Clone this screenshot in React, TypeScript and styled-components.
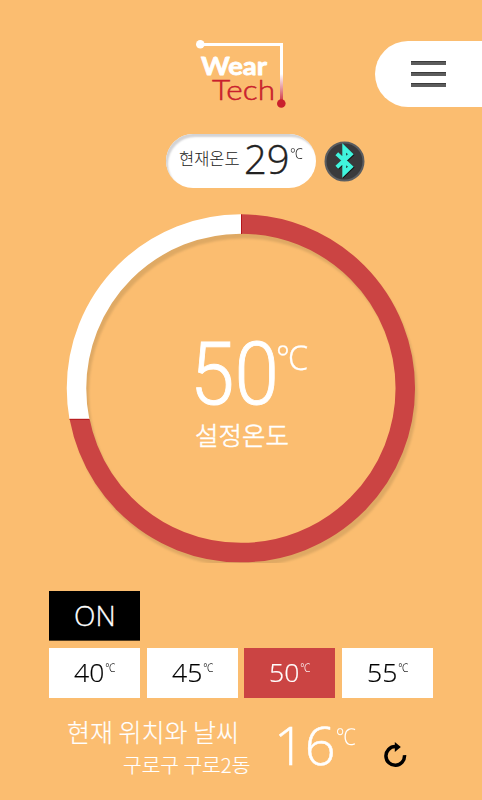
import React from "react";
import styled, { createGlobalStyle } from "styled-components";

const GlobalStyle = createGlobalStyle`
  body { margin: 0; background: #fbbd70; }
  button { border: 0; padding: 0; margin: 0; font: inherit; color: inherit; }
`;

const Screen = styled.main`
  width: 482px;
  height: 800px;
  overflow: hidden;
  background: #fbbd70;
  color: #fff;
  display: flex;
  flex-direction: column;
  font-family: "Noto Sans CJK KR", sans-serif;
`;

const Header = styled.header`
  height: 134px;
  flex: none;
  box-sizing: border-box;
  padding-top: 36px;
  padding-left: 192px;
  display: flex;
  justify-content: space-between;
  align-items: flex-start;
`;

const MenuButton = styled.button`
  width: 107px;
  height: 66px;
  margin-top: 5px;
  border-radius: 33px 0 0 33px;
  background: #fff;
  padding-left: 36px;
  display: flex;
  flex-direction: column;
  justify-content: center;
  gap: 7px;
`;

const MenuBar = styled.span`
  width: 35px;
  height: 4px;
  box-sizing: border-box;
  background: #5c5c5c;
  border-top: 1px solid #3c3c3c;
`;

const StatusRow = styled.section`
  height: 54px;
  flex: none;
  padding-left: 166px;
  display: flex;
  align-items: center;
  gap: 8px;
`;

const Pill = styled.div`
  width: 150px;
  height: 54px;
  box-sizing: border-box;
  padding-left: 13px;
  border-radius: 27px;
  background: #fff;
  box-shadow: inset 2px 3px 2px #d3d3d5;
  color: #222;
  display: flex;
`;

interface TextProps {
  $size: number;
  $line: number;
  $width: number;
  $top?: number;
  $left?: number;
  $stretch?: number;
  $weight?: number;
  $stroke?: number;
}

const Label = styled.span<TextProps>`
  display: block;
  flex: none;
  width: ${(p) => p.$width}px;
  height: ${(p) => p.$line}px;
  margin-top: ${(p) => p.$top ?? 0}px;
  margin-left: ${(p) => p.$left ?? 0}px;
  font-size: ${(p) => p.$size}px;
  line-height: ${(p) => p.$line}px;
  font-weight: ${(p) => p.$weight ?? 300};
  -webkit-text-stroke: ${(p) => p.$stroke ?? 0}px currentColor;
  white-space: nowrap;
  transform: scaleX(${(p) => p.$stretch ?? 1});
  transform-origin: left;
`;

const Digits = styled(Label)`
  font-family: "Open Sans", "Noto Sans", sans-serif;
`;

const BigDigits = styled(Label)`
  font-family: Roboto, "Liberation Sans", sans-serif;
`;

const Unit = styled(Label)`
  font-family: "Noto Sans", "Noto Sans CJK KR", sans-serif;
`;

const Gauge = styled.section`
  width: 360px;
  height: 360px;
  flex: none;
  margin: 20px 0 0 61px;
  display: grid;
  & > * { grid-area: 1 / 1; }
`;

const Reading = styled.div`
  padding: 120px 0 0 132px;
`;

const Row = styled.div`
  display: flex;
`;

const Controls = styled.section`
  margin: 23px 0 0 49px;
  flex: none;
`;

const PowerButton = styled.button`
  width: 91px;
  height: 50px;
  box-sizing: border-box;
  padding-left: 25px;
  background: #000;
  border-bottom: 1px solid #553f22;
  color: #fff;
  display: flex;
  text-align: left;
`;

const Presets = styled.div`
  width: 384px;
  margin-top: 7px;
  display: flex;
  justify-content: space-between;
`;

const Preset = styled.button<{ $active: boolean }>`
  width: 91px;
  height: 50px;
  padding-left: 25px;
  background: ${(p) => (p.$active ? "#cb4443" : "#fff")};
  color: ${(p) => (p.$active ? "#fff" : "#000")};
  display: flex;
  text-align: left;
`;

const Weather = styled.footer`
  display: flex;
  padding-left: 67px;
`;

const Place = styled.div`
  width: 207px;
`;

const RefreshButton = styled.button`
  width: 26px;
  height: 30px;
  margin: 42px 0 0 25px;
  background: transparent;
`;

const Logo = () => (
  <svg width="100" height="74" viewBox="192 36 100 74">
    <defs>
      <linearGradient id="wire" x1="0" y1="44" x2="0" y2="104" gradientUnits="userSpaceOnUse">
        <stop offset="0.5" stopColor="#fff" />
        <stop offset="1" stopColor="#c9202d" />
      </linearGradient>
    </defs>
    <path d="M200 44.5H281.5V104" fill="none" stroke="url(#wire)" strokeWidth="3" />
    <circle cx="200.3" cy="44.2" r="4.3" fill="#fff" />
    <circle cx="281.3" cy="103.5" r="4.3" fill="#c9202d" />
    <text x="201" y="75" fontFamily="Lato, sans-serif" fontWeight="700" fontSize="25" fill="#fff" stroke="#fff" strokeWidth="0.8" strokeLinejoin="round" textLength="66" lengthAdjust="spacingAndGlyphs">Wear</text>
    <text x="212" y="99.7" fontFamily="Lato, sans-serif" fontWeight="300" fontSize="27" fill="#c9202d" stroke="#c9202d" strokeWidth="0.5" textLength="63" lengthAdjust="spacingAndGlyphs">Tech</text>
  </svg>
);

const BluetoothBadge = () => (
  <svg width="41" height="41" viewBox="0 0 41 41">
    <circle cx="20.5" cy="20.5" r="19" fill="#3a3a3c" stroke="#5b5d60" strokeWidth="2" />
    <path d="M12.8 12.8L26.8 25.8L20.3 32V7L26.8 13.2L12.8 26.2" fill="none" stroke="#151515" strokeWidth="4" transform="translate(0.8 0.8)" />
    <path d="M12.8 12.8L26.8 25.8L20.3 32V7L26.8 13.2L12.8 26.2" fill="none" stroke="#40f5de" strokeWidth="4" />
  </svg>
);

const Ring = () => (
  <svg width="360" height="360" viewBox="61 208 360 360">
    <defs>
      <clipPath id="remaining"><rect x="61" y="208" width="180" height="211" /></clipPath>
      <clipPath id="filled"><path d="M241 208H421V568H61V419H241Z" /></clipPath>
      <clipPath id="frame"><rect x="61" y="208" width="360" height="355" /></clipPath>
      <filter id="soft"><feGaussianBlur stdDeviation="0.8" /></filter>
    </defs>
    <g clipPath="url(#frame)">
      <circle cx="243.5" cy="393" r="164.3" fill="none" stroke="#dfa964" strokeWidth="19.5" filter="url(#soft)" />
    </g>
    <circle cx="240.8" cy="388.3" r="164.3" fill="none" stroke="#fff" strokeWidth="19.5" clipPath="url(#remaining)" />
    <circle cx="241" cy="388.3" r="164.3" fill="none" stroke="#cb4443" strokeWidth="19.5" clipPath="url(#filled)" />
    <path d="M241.5 214.5V234M69.5 419.3H89" stroke="#b5171b" strokeWidth="1" />
  </svg>
);

const RefreshIcon = () => (
  <svg width="26" height="30" viewBox="382 740 26 30">
    <path d="M404.5 755.2A9.3 9.3 0 1 1 395.2 746.6" fill="none" stroke="#000" strokeWidth="3.5" />
    <path d="M394.8 742L400.8 747L394.8 752Z" fill="#000" />
  </svg>
);

const temperatures = [40, 45, 50, 55];

export default function App() {
  return (
    <>
      <GlobalStyle />
      <Screen>
        <Header>
          <Logo />
          <MenuButton aria-label="menu">
            <MenuBar />
            <MenuBar />
            <MenuBar />
          </MenuButton>
        </Header>
        <StatusRow>
          <Pill>
            <Label $size={16.5} $line={24} $width={65} $top={12}>현재온도</Label>
            <Digits $size={40} $line={54} $width={46} $top={-2} $stroke={0.4}>29</Digits>
            <Unit $size={15} $line={16} $width={14} $top={11} $stretch={0.85}>℃</Unit>
          </Pill>
          <BluetoothBadge />
        </StatusRow>
        <Gauge>
          <Ring />
          <Reading>
            <Row>
              <BigDigits $size={87} $line={86} $width={83} $top={3} $left={-3} $stretch={0.92} $stroke={0.9}>50</BigDigits>
              <Unit $size={34} $line={36} $width={34} $top={11} $left={3} $stretch={0.95} $stroke={0.3}>℃</Unit>
            </Row>
            <Label $size={25.5} $line={34} $width={96} $left={2} $top={0} $stroke={0.5}>설정온도</Label>
          </Reading>
        </Gauge>
        <Controls>
          <PowerButton>
            <Digits $size={28} $line={49} $width={42} $stroke={0.3}>ON</Digits>
          </PowerButton>
          <Presets>
            {temperatures.map((value) => (
              <Preset key={value} $active={value === 50}>
                <Digits $size={26} $line={48} $width={31} $stretch={1.02} $stroke={0.2}>{value}</Digits>
                <Unit $size={12} $line={12} $width={12} $top={14} $stretch={0.85}>℃</Unit>
              </Preset>
            ))}
          </Presets>
        </Controls>
        <Weather>
          <Place>
            <Label $size={25} $line={36} $width={174} $top={15} $stroke={0.2}>현재 위치와 날씨</Label>
            <Label $size={20.3} $line={30} $width={130} $left={56} $stroke={0.2}>구로구 구로2동</Label>
          </Place>
          <Digits $size={54} $line={70} $width={62} $top={11} $stroke={0.5}>16</Digits>
          <Unit $size={23} $line={24} $width={21} $top={26} $stretch={0.88}>℃</Unit>
          <RefreshButton aria-label="refresh"><RefreshIcon /></RefreshButton>
        </Weather>
      </Screen>
    </>
  );
}
